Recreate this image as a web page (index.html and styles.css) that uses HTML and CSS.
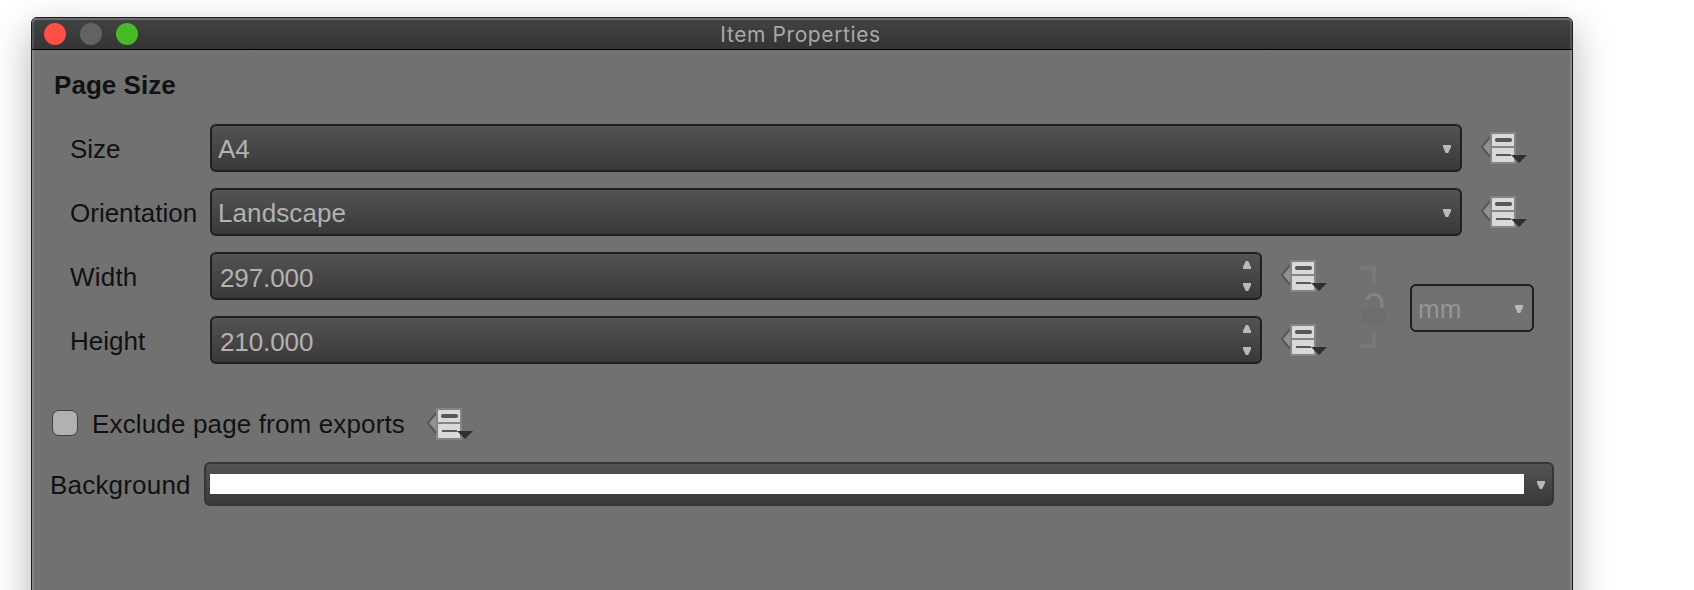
FILE: index.html
```html
<!DOCTYPE html>
<html lang="en">
<head>
<meta charset="utf-8">
<title>Item Properties</title>
<link rel="stylesheet" href="styles.css">
</head>
<body>
<svg class="defs" width="0" height="0" aria-hidden="true">
  <symbol id="override" viewBox="0 0 46 32">
    <path d="M10 4 .6 15l9.400 11z" fill="#909197"/>
    <path d="M10 4 .8 15l9.200 11" fill="none" stroke="#56575b" stroke-width="2"/>
    <path d="M9 0h26v32H9z" fill="#85867f"/>
    <path d="M11 2h22v12H11zM11 16h22v14H11z" fill="#d9d9d9"/>
    <rect x="14" y="6" width="17" height="4" rx="1.8" fill="#56585a"/>
    <path d="M15 23h15" stroke="#56585a" stroke-width="2"/>
    <path d="M30 23h16l-8 8z" fill="#303030"/>
  </symbol>
  <symbol id="down" viewBox="0 0 8 8"><path d="M0 0h8v2L5.200 8H2.800L0 2z" fill="#b9b9b9"/></symbol>
  <symbol id="up" viewBox="0 0 8 8"><path d="M0 8h8V6L5.200 0H2.800L0 6z" fill="#b9b9b9"/></symbol>
</svg>
<main class="window">
  <header class="titlebar">
    <div class="lights"><i class="light close"></i><i class="light minimize"></i><i class="light zoom"></i></div>
    <h1 class="title">Item Properties</h1>
  </header>
  <section class="content">
    <h2 class="heading">Page Size</h2>
    <div class="row">
      <label class="label">Size</label>
      <div class="field select"><span>A4</span><svg class="arrow"><use href="#down"/></svg></div>
      <svg class="override"><use href="#override"/></svg>
    </div>
    <div class="row">
      <label class="label">Orientation</label>
      <div class="field select"><span class="landscape">Landscape</span><svg class="arrow"><use href="#down"/></svg></div>
      <svg class="override"><use href="#override"/></svg>
    </div>
    <div class="dimensions">
      <div class="pair">
        <div class="row">
          <label class="label width-label">Width</label>
          <div class="field spin"><span class="number">297.000</span><span class="steps"><svg class="arrow"><use href="#up"/></svg><svg class="arrow"><use href="#down"/></svg></span></div>
          <svg class="override"><use href="#override"/></svg>
        </div>
        <div class="row">
          <label class="label">Height</label>
          <div class="field spin"><span class="number">210.000</span><span class="steps"><svg class="arrow"><use href="#up"/></svg><svg class="arrow"><use href="#down"/></svg></span></div>
          <svg class="override"><use href="#override"/></svg>
        </div>
      </div>
      <svg class="lock" viewBox="0 0 26 82">
        <path d="M0 2h14v16M0 80h14V66" fill="none" stroke="#797979" stroke-width="4"/>
        <path d="M7 34c1-4 4-5.500 7-5.500 5 0 8 4 8 8V42" fill="none" stroke="#848484" stroke-width="3"/>
        <rect x="2" y="42" width="24" height="16" rx="2" fill="#6d6d6d"/>
      </svg>
      <div class="field unit"><span>mm</span><svg class="arrow"><use href="#down"/></svg></div>
    </div>
    <div class="exclude">
      <span class="checkbox"></span>
      <label class="exclude-label">Exclude page from exports</label>
      <svg class="override"><use href="#override"/></svg>
    </div>
    <div class="background">
      <label class="background-label">Background</label>
      <div class="color-button"><span class="swatch"></span><svg class="arrow"><use href="#down"/></svg></div>
    </div>
  </section>
</main>
</body>
</html>
```

FILE: styles.css
```css
* { box-sizing: border-box; }
html, body { height: 100%; }
html { overflow: hidden; }
body {
  margin: 0;
  padding: 17px 121px 0 31px;
  overflow: hidden;
  background: #fff;
  color: #111;
  font: 26px/48px "Liberation Sans", Arial, sans-serif;
}
.defs { position: absolute; }
svg { display: block; flex: none; }
.window {
  height: 640px;
  border: 1px solid #1b1b1c;
  border-radius: 6px;
  background: #717171;
  box-shadow: inset 2px 0 #868686, inset -2px 0 #868686, 0 14px 40px rgba(0, 0, 0, .3);
}
.titlebar {
  display: grid;
  grid-template-columns: 1fr auto 1fr;
  height: 32px;
  padding: 0 12px;
  border-bottom: 1px solid #000;
  border-radius: 5px 5px 0 0;
  background: linear-gradient(#434343, #343434);
  box-shadow: inset 0 2px #6c6c6c, inset 2px 0 #555, inset -2px 0 #555;
}
.lights { display: flex; gap: 14px; padding-top: 5px; }
.light { width: 22px; height: 22px; border-radius: 50%; }
.close { background: #ff5048; }
.minimize { background: #626262; }
.zoom { background: #4ab927; }
.title {
  margin: 0 3px 0 0;
  padding-top: 1px;
  color: #a8a8a8;
  font: 400 21px/32px Inter, sans-serif;
  letter-spacing: .6px;
}
.content { padding: 11px 18px 0 15px; }
.heading { height: 48px; margin: 0 0 15px 7px; font-size: 26px; line-height: 48px; letter-spacing: .05px; }
.row { display: flex; align-items: center; height: 48px; margin: 0 33px 16px 23px; }
.label { width: 140px; padding-top: 2px; }
.width-label { letter-spacing: .2px; }
.field {
  display: flex;
  align-items: center;
  height: 48px;
  border: 2px solid #202020;
  border-radius: 6px;
  background: linear-gradient(#535353, #393939);
  color: #b2b2b2;
  line-height: 44px;
}
.field span { padding-top: 2px; }
.select { flex: 1; justify-content: space-between; padding: 0 9px 0 6px; }
.landscape { letter-spacing: .1px; }
.arrow { width: 8px; height: 8px; }
.select .arrow, .unit .arrow, .color-button .arrow { margin-top: 2px; }
.override { width: 46px; height: 32px; margin: 0 0 0 19px; }
.row .override { margin: 0 -6px 0 19px; }
.dimensions { display: flex; }
.pair { width: 1304px; }
.pair .row { margin-right: 14px; }
.pair .override { margin-right: 0; }
.spin { width: 1052px; justify-content: space-between; padding: 0 9px 0 8px; }
.spin .number { padding-top: 4px; letter-spacing: -.1px; }
.field .steps { display: grid; gap: 14px; padding: 0; }
.lock { width: 26px; height: 82px; margin: 14px 0 0 9px; }
.unit { width: 124px; margin: 32px 0 0 24px; padding: 0 9px 0 6px; justify-content: space-between; background: none; color: #969696; }
.exclude { display: flex; align-items: center; height: 48px; margin: 19px 0 0 5px; }
.checkbox { width: 26px; height: 26px; border: 1px solid #404040; border-radius: 7px; background: #b1b1b1; }
.exclude-label { width: 330px; margin-left: 14px; padding-top: 2px; letter-spacing: .15px; }
.exclude .override { margin: 2px 0 0 5px; }
.background { display: flex; height: 44px; margin: 15px 0 0 3px; line-height: 46px; }
.background-label { width: 154px; letter-spacing: .2px; }
.color-button {
  display: flex;
  flex: 1;
  align-items: center;
  justify-content: space-between;
  padding: 0 7px 0 4px;
  border: 2px solid #363636;
  border-radius: 6px;
  background: linear-gradient(#535353, #393939);
}
.swatch { width: 1314px; height: 20px; background: #fff; }
```
